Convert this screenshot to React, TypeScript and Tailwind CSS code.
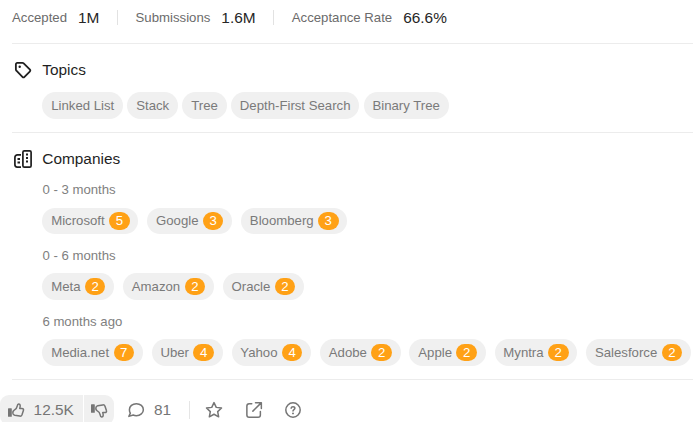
import type { ReactNode } from "react";

type Company = { name: string; count: number };

const stats = [
  { label: "Accepted", value: "1M" },
  { label: "Submissions", value: "1.6M" },
  { label: "Acceptance Rate", value: "66.6%" },
];

const topics = ["Linked List", "Stack", "Tree", "Depth-First Search", "Binary Tree"];

const groups: { period: string; companies: Company[] }[] = [
  {
    period: "0 - 3 months",
    companies: [
      { name: "Microsoft", count: 5 },
      { name: "Google", count: 3 },
      { name: "Bloomberg", count: 3 },
    ],
  },
  {
    period: "0 - 6 months",
    companies: [
      { name: "Meta", count: 2 },
      { name: "Amazon", count: 2 },
      { name: "Oracle", count: 2 },
    ],
  },
  {
    period: "6 months ago",
    companies: [
      { name: "Media.net", count: 7 },
      { name: "Uber", count: 4 },
      { name: "Yahoo", count: 4 },
      { name: "Adobe", count: 2 },
      { name: "Apple", count: 2 },
      { name: "Myntra", count: 2 },
      { name: "Salesforce", count: 2 },
    ],
  },
];

function Line({ size, children }: { size: number; children: ReactNode }) {
  return (
    <svg
      width={size}
      height={size}
      viewBox="0 0 24 24"
      fill="none"
      stroke="currentColor"
      strokeWidth="2"
      strokeLinecap="round"
      strokeLinejoin="round"
      className="shrink-0"
    >
      {children}
    </svg>
  );
}

function TagIcon() {
  return (
    <Line size={18}>
      <path
        strokeWidth="2.4"
        d="M2.500 4.200v7.100c0 .6.2 1.200.7 1.600l8 8.200c.8.8 2 .8 2.800 0l7-7c.8-.8.8-2 0-2.800l-8.100-8c-.4-.4-1-.7-1.600-.7H4.200c-.9 0-1.700.7-1.700 1.600z"
      />
      <circle cx="7.600" cy="7.600" r="1.600" fill="currentColor" stroke="none" />
    </Line>
  );
}

function CompaniesIcon() {
  return (
    <svg width="18" height="18" viewBox="0 0 18 18" fill="none" stroke="currentColor" className="shrink-0">
      <rect x="8.900" y="0.900" width="8.200" height="16.200" rx="1.400" strokeWidth="1.700" />
      <path d="M7 4.900H3.400C2 4.900.9 6 .9 7.400v7.200c0 1.400 1 2.500 2.300 2.500H7" strokeWidth="1.700" />
      <path
        d="M12 4.500h2M12 8h2M12 11.500h2M3.500 9h2.500M3.500 12.500h2.500"
        strokeWidth="1.900"
      />
    </svg>
  );
}

function ThumbIcon({ down = false }: { down?: boolean }) {
  return (
    <svg
      width="18"
      height="18"
      viewBox={down ? "0 1 18 18" : "0 0 18 18"}
      fill="none"
      stroke="currentColor"
      className={down ? "shrink-0 -scale-y-100" : "shrink-0"}
    >
      <rect x="1" y="7.200" width="3.800" height="8.600" rx=".6" fill="currentColor" stroke="none" />
      <path
        d="M7 9.400c2.100-1.100 2.900-2.200 3.200-4.300.2-1.500.7-2.300 1.600-2.200 1.500.2 1.800 1.900.9 4.500h2.200c1.300 0 1.900.9 1.500 2L15 13.700c-.4 1.100-1.200 1.600-2.300 1.400l-4.900-.8c-.8-.2-1.400-.6-1.700-1.300-.4-1.300-.1-3 .9-3.600z"
        strokeWidth="1.500"
        strokeLinejoin="round"
      />
    </svg>
  );
}

function Section({ icon, title, children }: { icon: ReactNode; title: string; children: ReactNode }) {
  return (
    <section>
      <h2 className="flex h-6 items-center gap-[10.3px] pl-[2px] text-[15.4px] text-[#1f1f1f]">
        {icon}
        {title}
      </h2>
      <div className="pl-[30.4px]">{children}</div>
    </section>
  );
}

function CompanyChip({ name, count }: Company) {
  return (
    <a className="flex h-[26.4px] items-center gap-[4.4px] rounded-full bg-[#f0f0f0] px-[8.8px] text-[13.2px] text-[#7a7a7a]">
      {name}
      <span className="flex h-[17.6px] items-center rounded-full bg-[#ffa116] px-[6.6px] text-white">{count}</span>
    </a>
  );
}

export default function App() {
  return (
    <main className="h-[422px] w-full overflow-hidden bg-white font-['Liberation_Sans',Arial,sans-serif] whitespace-nowrap">
      <div className="pl-3">
        <div className="flex h-[43px] items-center pb-[8px]">
          {stats.map(({ label, value }, i) => (
            <div key={label} className="flex items-center">
              {i > 0 && <span className="mx-[17.6px] h-[15px] w-px bg-[#e2e2e2]" />}
              <span className="mr-[11px] text-[13.2px] text-[#6b6b6b]">{label}</span>
              <span className="text-[15.4px] text-[#262626]">{value}</span>
            </div>
          ))}
        </div>
        <div className="h-[89px] border-t border-[#ececec] pt-[14px]">
          <Section icon={<TagIcon />} title="Topics">
            <div className="mt-[10px] flex gap-[4.4px]">
              {topics.map((topic) => (
                <a key={topic} className="flex h-[27px] items-center rounded-full bg-[#f0f0f0] px-[8.8px] text-[13.2px] text-[#7a7a7a]">
                  {topic}
                </a>
              ))}
            </div>
          </Section>
        </div>
        <div className="h-[247px] border-t border-[#ececec] pt-[14px]">
          <Section icon={<CompaniesIcon />} title="Companies">
            <div className="pt-[9px]">
              {groups.map(({ period, companies }) => (
                <div key={period} className="h-[65.87px]">
                  <div className="flex h-5 items-center text-[13.2px] text-[#808080]">{period}</div>
                  <div className="mt-[7.6px] flex gap-[8.8px]">
                    {companies.map((company) => (
                      <CompanyChip key={company.name} {...company} />
                    ))}
                  </div>
                </div>
              ))}
            </div>
          </Section>
        </div>
        <div className="h-4 border-t border-[#ececec]" />
      </div>
      <footer className="flex h-[30px] items-center text-[15.4px] text-[#757575]">
        <button className="flex h-full w-[83px] items-center gap-[8.6px] rounded-l-[9px] bg-[#f0f0f0] pl-[7px]">
          <ThumbIcon />
          12.5K
        </button>
        <button className="ml-px flex h-full w-[30px] items-center justify-center rounded-r-[9px] bg-[#f0f0f0]">
          <ThumbIcon down />
        </button>
        <button className="ml-[13px] flex items-center gap-[9px]">
          <Line size={18}>
            <path d="M12.500 3.500c5.300 0 9.300 3.500 9.300 8s-4 8-9.300 8c-1.500 0-2.900-.2-4.200-.8L2.500 20.500l2-4.300c-.9-1.400-1.300-3-1.300-4.700 0-4.500 4-8 9.300-8z" />
          </Line>
          81
        </button>
        <span className="ml-[18px] h-[18px] w-px bg-[#e5e5e5]" />
        <button className="ml-[15px]">
          <Line size={18}>
            <path d="m12 2.200 3 6.300 7 .9-5.100 4.800 1.300 6.900-6.200-3.400-6.200 3.400 1.300-6.900L2 9.400l7-.9z" />
          </Line>
        </button>
        <button className="ml-[22px]">
          <Line size={18}>
            <path d="M9 3.500H5.500a3 3 0 0 0-3 3v12a3 3 0 0 0 3 3h12a3 3 0 0 0 3-3V14M14 2.200h7.800V10M21.500 2.500 10.500 13.500" />
          </Line>
        </button>
        <button className="ml-[21px]">
          <Line size={18}>
            <circle cx="12" cy="12" r="9.600" />
            <path d="M9.500 9.600c.2-1.300 1.200-2.100 2.500-2.100 1.400 0 2.500.9 2.500 2.200 0 1.600-2.500 1.900-2.500 3.500" />
            <circle cx="12" cy="16.500" r="1.300" fill="currentColor" stroke="none" />
          </Line>
        </button>
      </footer>
    </main>
  );
}
